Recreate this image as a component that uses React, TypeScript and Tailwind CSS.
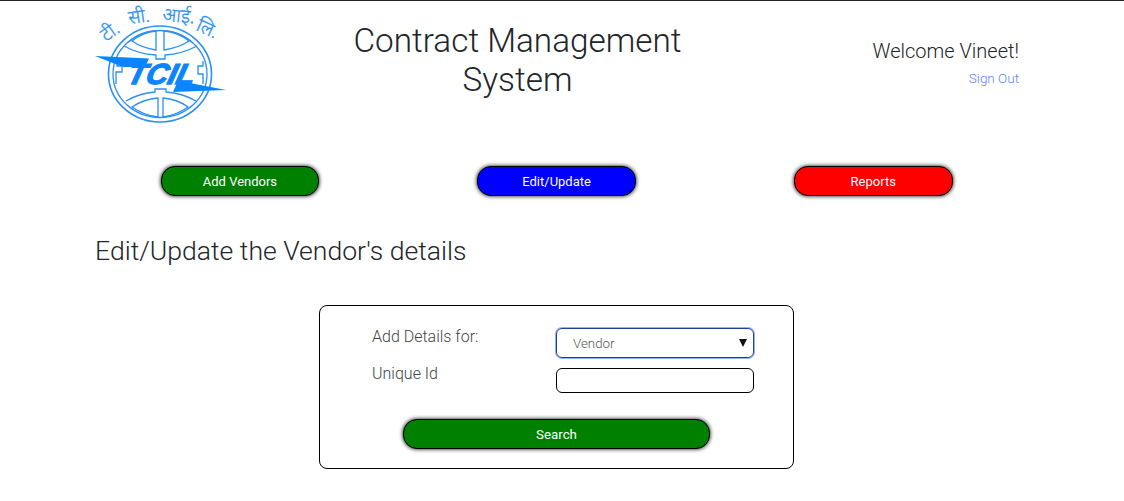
import { Fragment } from "react";

function Logo() {
	const blue = "#2a90f5";
	return (
		<svg viewBox="95 1 135 130" className="h-[130px] w-[135px] shrink-0" fill="none">
			{/* globe rings */}
			<ellipse cx="160" cy="74" rx="51.5" ry="48" stroke={blue} strokeWidth="1.6" />
			<ellipse cx="160" cy="74" rx="47" ry="43.5" stroke={blue} strokeWidth="1.3" />
			{/* upper panes */}
			<path d="M132 41 Q143 32 156 31 V50 Q142 48 132 41Z" stroke={blue} strokeWidth="1.3" />
			<path d="M189 41 Q178 32 164 31 V50 Q178 48 189 41Z" stroke={blue} strokeWidth="1.3" />
			<path d="M124 46 Q138 54 156 55 V59 H165 V55 Q182 54 197 46" stroke={blue} strokeWidth="1.3" />
			{/* lower panes */}
			<path d="M132 107 Q144 99 158 98 V117 Q143 115 132 107Z" stroke={blue} strokeWidth="1.3" />
			<path d="M188 107 Q177 99 163 98 V117 Q177 115 188 107Z" stroke={blue} strokeWidth="1.3" />
			<path d="M126 101 Q140 93 155 92 V89 H166 V92 Q182 93 196 101" stroke={blue} strokeWidth="1.3" />
			{/* side notches */}
			<path d="M117 61 V66 H122 V72 H116 V84" stroke={blue} strokeWidth="1.3" />
			<path d="M203 61 V66 H198 V74 H203 V84" stroke={blue} strokeWidth="1.3" />
			{/* bolt */}
			<polygon points="95,56 149,58.5 145,67 123,67" fill="#0a84ff" />
			<polygon points="226,90 173,92 177,83 190,83" fill="#0a84ff" />
			<text
				transform="translate(126 84) skewX(-14)"
				fill="#0a84ff"
				stroke="#0a84ff"
				strokeWidth="1.3"
				fontFamily="Liberation Sans, sans-serif"
				fontWeight="700"
				fontStyle="italic"
				fontSize="29"
				textLength="67"
				lengthAdjust="spacingAndGlyphs"
			>
				TCIL
			</text>
			{/* hindi name round the top */}
			<g fill={blue} stroke={blue} strokeWidth="0.3" fontFamily="Noto Sans, sans-serif" fontSize="19">
				<text x="99" y="36" transform="rotate(-35 112 28)">टी.</text>
				<text x="128" y="23" transform="rotate(-8 138 15)">सी.</text>
				<text x="163" y="22" transform="rotate(5 178 13)">आई.</text>
				<text x="197" y="35" transform="rotate(25 208 28)">लि.</text>
			</g>
		</svg>
	);
}

function NavButton({ label, color }: { label: string; color: string }) {
	return (
		<div className="flex justify-center">
			<button className={`h-[30px] w-[158.5px] rounded-[14px] border border-black pt-[1px] text-[13px] text-white shadow-[0_0_4px_#000] ${color}`}>
				{label}
			</button>
		</div>
	);
}

const rows = [
	{ label: "Add Details for:" },
	{ label: "Unique Id" },
];

export default function App() {
	return (
		<div className="min-h-[501px] overflow-hidden border-t border-[#222] bg-white font-['Roboto',sans-serif] font-light text-[#212529]">
			{/* Header */}
			<div className="ml-[95px] flex h-[130px] w-[924px]">
				<Logo />
				<div className="w-[575px] pt-[20px] text-center text-[33.3px] leading-[39px]">
					<div>Contract Management</div>
					<div>System</div>
				</div>
				<div className="flex-1 pt-[37px] text-right">
					<div className="text-[20px] leading-[26px]">Welcome Vineet!</div>
					<a className="mt-[4px] block text-[13.5px] leading-[20px] text-[#5b86ff]">Sign Out</a>
				</div>
			</div>

			{/* Nav */}
			<div className="mt-[35px] ml-[81.6px] grid w-[950px] grid-cols-3 font-normal">
				<NavButton label="Add Vendors" color="bg-[#008000]" />
				<NavButton label="Edit/Update" color="bg-[#0000ff]" />
				<NavButton label="Reports" color="bg-[#ff0000]" />
			</div>

			<h1 className="mt-[39px] ml-[95px] text-[26.6px] leading-[32px] font-light">Edit/Update the Vendor's details</h1>

			{/* Form card */}
			<div className="mt-[38px] ml-[319px] h-[164px] w-[475px] rounded-[8px] border border-black pt-[21px]">
				<div className="ml-[52px] grid w-[383px] grid-cols-[184px_198px] gap-y-[10px] text-[16px]">
					{rows.map((row, i) => (
						<Fragment key={row.label}>
							<label className={`leading-[20px] text-[#444] ${i === 1 ? "-mt-[4px]" : ""}`}>{row.label}</label>
							{i === 0 ? (
								<div className="relative mt-[1px] h-[30px]">
									<select className="h-[30px] w-full appearance-none rounded-[6px] border border-[#1a3f9c] pt-[1px] pl-4 text-[13.33px] text-[#555] shadow-[0_0_0_1px_#8fb4f7] outline-none">
										<option>Vendor</option>
									</select>
									<svg viewBox="0 0 8 8" className="absolute top-[11px] right-[7px] h-[8px] w-[8px]">
										<path d="M0 0H8L4 8Z" fill="#111" />
									</svg>
								</div>
							) : (
								<input className="h-[25px] w-full rounded-[6px] border border-black outline-none" />
							)}
						</Fragment>
					))}
				</div>
				<div className="mt-[26px] flex justify-center font-normal">
					<button className="h-[30px] w-[307px] rounded-[14px] border border-black bg-[#008000] pt-[1px] text-[13.33px] text-white shadow-[0_0_4px_#000]">
						Search
					</button>
				</div>
			</div>
		</div>
	);
}
